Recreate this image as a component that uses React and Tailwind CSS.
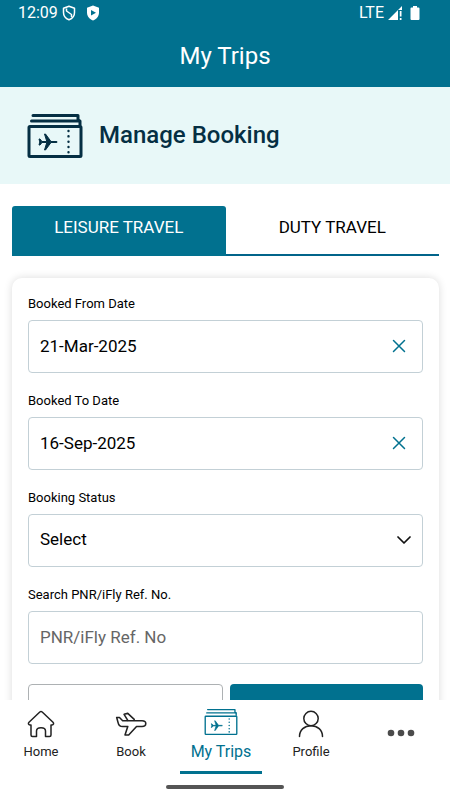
import React, { useState } from 'react';

// Stack of boarding passes, shared by the banner and the bottom bar
const TicketsIcon = ({ className, strokeWidth = 3 }) => (
  <svg viewBox="0 0 56 46" className={className} fill="none" stroke="currentColor" strokeWidth={strokeWidth} strokeLinecap="round" strokeLinejoin="round" aria-hidden="true">
    <path d="M6 2.500H51V7L53 8V12" />
    <path d="M4.500 8H52.500" />
    <rect x="2" y="13.500" width="52" height="30" rx="1" />
    <path d="M41.500 18V42" strokeWidth="2.400" strokeDasharray="0.100 5.200" />
    <path
      d="M29.500 28.500H24L18.500 21H17.500L19.800 28.500H15L13 26H12L12.800 29L12 32H13L15 29.500H19.800L17.500 37H18.500L24 29.500H29.500Z"
      fill="currentColor"
      strokeWidth="1"
    />
  </svg>
);

const HomeIcon = () => (
  <svg viewBox="0 0 28 28" className="size-7" fill="none" stroke="currentColor" strokeWidth="1.500" strokeLinecap="round" strokeLinejoin="round" aria-hidden="true">
    <path d="M12.800 2L2 12.200C.8 13.500 1.500 15 3 15H4V25Q4 26.500 5.500 26.500H9.500V21Q9.500 17.800 14 17.800Q18.500 17.800 18.500 21V26.500H22.500Q24 26.500 24 25V15H25C26.500 15 27.200 13.500 26 12.200L15.200 2Q14 1 12.800 2Z" />
  </svg>
);

const PlaneIcon = () => (
  <svg viewBox="0 0 34 26" className="h-6 w-8" fill="none" stroke="currentColor" strokeWidth="1.700" strokeLinecap="round" strokeLinejoin="round" aria-hidden="true">
    <path d="M1.500 6H4.500L8 9.500H29C31.500 9.500 33 11 33 12.500C33 14.500 31.500 15.800 29 15.800H23L14.500 25H10.500L13.500 15.800H8C5 15.800 3.500 14 3 11.500Z" />
    <path d="M13.500 9L9.500 2.500L13.500 1.500L20.500 8" />
  </svg>
);

const ProfileIcon = () => (
  <svg viewBox="0 0 28 28" className="size-7" fill="none" stroke="currentColor" strokeWidth="1.500" strokeLinecap="round" aria-hidden="true">
    <circle cx="14" cy="8.500" r="7.200" />
    <path d="M2.500 26.500C2.500 20 7.500 15.700 14 15.700S25.500 20 25.500 26.500" />
  </svg>
);

const MoreIcon = () => (
  <svg viewBox="0 0 28 8" className="h-2 w-7" fill="#4b4b4b" aria-hidden="true">
    <circle cx="4" cy="4" r="3.300" />
    <circle cx="14" cy="4" r="3.300" />
    <circle cx="24" cy="4" r="3.300" />
  </svg>
);

const StatusBar = () => (
  <div className="flex h-[26px] items-center justify-between pr-[30px] pl-[18px] text-[16px] leading-6">
    <div className="flex items-center">
      <span>12:09</span>
      <svg viewBox="0 0 14 16" className="ml-1 h-4 w-3.5" fill="none" stroke="currentColor" strokeWidth="1.500" strokeLinejoin="round" aria-hidden="true">
        <path d="M7 1.200L12.500 3.200V7.500C12.500 11 10 13.700 7 14.800C4 13.700 1.500 11 1.500 7.500V3.200Z" />
        <path d="M4.500 3.500V6L9.500 9.500V12" />
      </svg>
      <svg viewBox="0 0 14 16" className="ml-2.5 h-4 w-3.5" aria-hidden="true">
        <path d="M7 .5L13 2.800V7.500C13 11.300 10.300 14.400 7 15.500C3.700 14.400 1 11.300 1 7.500V2.800Z" fill="currentColor" />
        <path d="M5 5L10 7.800L5 10.600Z" fill="#01718f" />
      </svg>
    </div>
    <div className="flex items-center">
      <span>LTE</span>
      <svg viewBox="0 0 14 14" className="ml-1 size-3.5" fill="currentColor" aria-hidden="true">
        <path d="M0 14L14 0V4H10V14Z" />
        <path d="M11.800 5H13.500V10.500H11.800ZM11.800 12H13.500V14H11.800Z" />
      </svg>
      <svg viewBox="0 0 10 14" className="ml-2 h-3.5 w-2.5" fill="currentColor" aria-hidden="true">
        <path d="M3 0H7V1.500H8.500Q9.500 1.500 9.500 2.500V13Q9.500 14 8.500 14H1.500Q.5 14 .5 13V2.500Q.5 1.500 1.500 1.500H3Z" />
      </svg>
    </div>
  </div>
);

const labelClass = 'block text-[13px] leading-5';
const fieldClass = 'h-[53px] w-full rounded-[4px] border border-[#c3d0d6] bg-white px-[11px] pb-0.5 text-[17px] text-black outline-none placeholder:text-[#666]';

const DateField = ({ id, label, value, onChange }) => (
  <div>
    <label htmlFor={id} className={labelClass}>{label}</label>
    <div className="relative mt-1.5">
      <input id={id} type="text" value={value} onChange={(e) => onChange(e.target.value)} className={fieldClass} />
      <button
        type="button"
        aria-label={`Clear ${label}`}
        onClick={() => onChange('')}
        className="absolute inset-y-0 right-3 flex w-6 items-center justify-center pb-0.5 text-[#01718f]"
      >
        <svg viewBox="0 0 14 14" className="size-3.5" fill="none" stroke="currentColor" strokeWidth="1.500" strokeLinecap="round" aria-hidden="true">
          <path d="M1.500 1.500L12.500 12.500M12.500 1.500L1.500 12.500" />
        </svg>
      </button>
    </div>
  </div>
);

const navItems = [
  { label: 'Home', icon: <HomeIcon /> },
  { label: 'Book', icon: <PlaneIcon /> },
  { label: 'My Trips', icon: <TicketsIcon className="mb-1 h-7 w-[34px]" strokeWidth={2.2} />, active: true },
  { label: 'Profile', icon: <ProfileIcon /> },
];

const App = () => {
  const [tab, setTab] = useState('leisure');
  const [fromDate, setFromDate] = useState('21-Mar-2025');
  const [toDate, setToDate] = useState('16-Sep-2025');
  const [status, setStatus] = useState('');
  const [pnr, setPnr] = useState('');

  const clearForm = () => {
    setFromDate('');
    setToDate('');
    setStatus('');
    setPnr('');
  };

  const tabClass = (name) =>
    name === tab
      ? 'flex-1 rounded-t-[3px] bg-[#01718f] pb-1.5 text-white'
      : 'flex-1 border-b-2 border-[#01648a] pb-1 text-black';

  return (
    <div className="flex h-screen flex-col bg-white font-['Roboto',sans-serif] text-black">
      {/* Header */}
      <header className="bg-[#01718f] text-white">
        <StatusBar />
        <h1 className="pt-3.5 pb-[15px] text-center text-[24px] leading-8">My Trips</h1>
      </header>

      <main className="min-h-0 flex-1 overflow-y-auto [scrollbar-width:none]">
        {/* Banner */}
        <div className="flex h-[97px] items-center gap-4 bg-[#e8f8f8] px-[27px] text-[#052f43]">
          <TicketsIcon className="h-[46px] w-14" />
          <h2 className="pb-0.5 text-[24px] leading-8 font-medium">Manage Booking</h2>
        </div>

        {/* Tabs */}
        <div className="mr-[11px] ml-3 mt-[22px] flex h-[50px] text-[17px]" role="tablist">
          <button type="button" role="tab" aria-selected={tab === 'leisure'} onClick={() => setTab('leisure')} className={tabClass('leisure')}>
            LEISURE TRAVEL
          </button>
          <button type="button" role="tab" aria-selected={tab === 'duty'} onClick={() => setTab('duty')} className={tabClass('duty')}>
            DUTY TRAVEL
          </button>
        </div>

        {/* Search form */}
        <form
          onSubmit={(e) => e.preventDefault()}
          className="mr-[11px] ml-3 mt-[22px] mb-6 flex flex-col gap-[18px] rounded-[10px] px-4 pt-4 pb-6 shadow-[0_0_8px_rgba(0,0,0,0.14)]"
        >
          <DateField id="from" label="Booked From Date" value={fromDate} onChange={setFromDate} />
          <DateField id="to" label="Booked To Date" value={toDate} onChange={setToDate} />

          <div>
            <label htmlFor="status" className={labelClass}>Booking Status</label>
            <div className="relative mt-1.5">
              <select id="status" value={status} onChange={(e) => setStatus(e.target.value)} className={`${fieldClass} appearance-none`}>
                <option value="">Select</option>
              </select>
              <svg viewBox="0 0 14 8" className="pointer-events-none absolute top-[22px] right-3 h-2 w-3.5" fill="none" stroke="#111" strokeWidth="1.700" strokeLinecap="round" strokeLinejoin="round" aria-hidden="true">
                <path d="M1 1L7 7L13 1" />
              </svg>
            </div>
          </div>

          <div>
            <label htmlFor="pnr" className={labelClass}>Search PNR/iFly Ref. No.</label>
            <input
              id="pnr"
              type="text"
              placeholder="PNR/iFly Ref. No"
              value={pnr}
              onChange={(e) => setPnr(e.target.value)}
              className={`${fieldClass} mt-1.5`}
            />
          </div>

          <div className="flex gap-[7px] pt-0.5">
            <button type="button" aria-label="Clear" onClick={clearForm} className="h-12 flex-1 rounded-[4px] border border-[#adb1b3] bg-white" />
            <button type="submit" aria-label="Search" className="h-12 flex-1 rounded-[4px] bg-[#01718f]" />
          </div>
        </form>
      </main>

      {/* Bottom navigation */}
      <footer className="bg-white">
        <nav className="mr-1 -ml-1 flex h-[74px]">
          {navItems.map(({ label, icon, active }) => (
            <a
              key={label}
              href="#"
              className={
                active
                  ? 'flex flex-1 flex-col items-center text-[16px] text-[#01718f]'
                  : 'flex flex-1 flex-col items-center text-[13px] text-[#222]'
              }
            >
              <span className="mt-2.5 flex h-7 items-center">{icon}</span>
              <span className="mt-1 leading-5">{label}</span>
              {active && <span className="mt-auto h-[3px] w-[82px] bg-[#01718f]" />}
            </a>
          ))}
          <a href="#" aria-label="More" className="flex flex-1 items-center justify-center pb-2">
            <MoreIcon />
          </a>
        </nav>
        <div className="mx-auto mt-[11px] mb-[11px] h-1 w-[118px] rounded-full bg-[#555]" />
      </footer>
    </div>
  );
};

export default App;
